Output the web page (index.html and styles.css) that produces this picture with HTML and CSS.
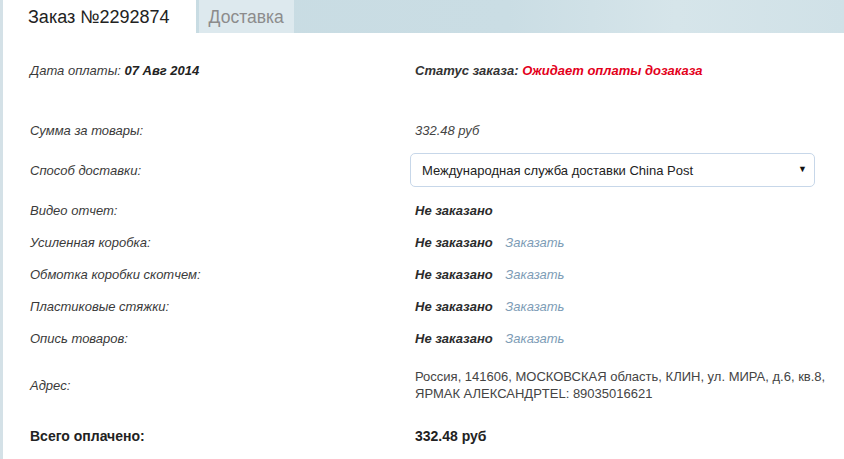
FILE: index.html
```html
<!DOCTYPE html>
<html lang="ru">
<head>
    <meta charset="UTF-8">
    <title>Заказ №2292874</title>
    <link rel="stylesheet" href="styles.css">
</head>
<body>
    <div class="page">
        <div class="tabs">
            <div class="tab active">Заказ №2292874</div>
            <div class="tab">Доставка</div>
        </div>

        <div class="order">
            <div class="row row-first">
                <div class="label">Дата оплаты: <b>07 Авг 2014</b></div>
                <div class="status">Статус заказа: <span class="status-value">Ожидает оплаты дозаказа</span></div>
            </div>

            <div class="row">
                <div class="label">Сумма за товары:</div>
                <div class="value">332.48 руб</div>
            </div>

            <div class="row row-select">
                <div class="label">Способ доставки:</div>
                <div class="select-wrap">
                    <select class="select">
                        <option>Международная служба доставки China Post</option>
                    </select>
                </div>
            </div>

            <div class="row">
                <div class="label">Видео отчет:</div>
                <div class="value"><b>Не заказано</b></div>
            </div>
            <div class="row">
                <div class="label">Усиленная коробка:</div>
                <div class="value"><b>Не заказано</b> <a href="#" class="order-link">Заказать</a></div>
            </div>
            <div class="row">
                <div class="label">Обмотка коробки скотчем:</div>
                <div class="value"><b>Не заказано</b> <a href="#" class="order-link">Заказать</a></div>
            </div>
            <div class="row">
                <div class="label">Пластиковые стяжки:</div>
                <div class="value"><b>Не заказано</b> <a href="#" class="order-link">Заказать</a></div>
            </div>
            <div class="row">
                <div class="label">Опись товаров:</div>
                <div class="value"><b>Не заказано</b> <a href="#" class="order-link">Заказать</a></div>
            </div>

            <div class="row row-address">
                <div class="label">Адрес:</div>
                <div class="address">Россия, 141606, МОСКОВСКАЯ область, КЛИН, ул. МИРА, д.6, кв.8,<br>ЯРМАК АЛЕКСАНДРTEL: 89035016621</div>
            </div>

            <div class="row row-total">
                <div class="total-label">Всего оплачено:</div>
                <div class="total-value">332.48 руб</div>
            </div>
        </div>
    </div>
</body>
</html>
```

FILE: styles.css
```css
body {
    margin: 0;
    font-family: 'Liberation Sans', Arial, sans-serif;
    background-color: #fff;
    color: #333;
}

.page {
    border-left: 3px solid #d4e1e7;
    min-height: 459px;
    box-sizing: border-box;
}

/* tabs */
.tabs {
    display: flex;
    height: 33px;
    background: linear-gradient(to right, #c7dbe2 0%, #cadde4 60%, #d6e5ea 80%, #d0e1e7 100%);
}

.tab {
    line-height: 34px;
    font-size: 17.5px;
    color: #8c8c8c;
    background-color: #dde9ee;
    padding: 0 10px;
    margin-left: 3px;
}

.tab.active {
    background-color: #fff;
    color: #222;
    font-size: 18px;
    padding: 0 26px 0 25px;
    margin-left: 0;
}

/* order info */
.order {
    padding: 21px 0 0 27px;
}

.row {
    display: grid;
    grid-template-columns: 385px 1fr;
    align-items: center;
    height: 32px;
    font-size: 13px;
}

.row-first {
    margin-bottom: 28px;
}

.row-select {
    height: 48px;
}

.row-address {
    height: 62px;
}

.row-total {
    height: 40px;
}

.label {
    font-style: italic;
    color: #3a3a3a;
}

.label b {
    color: #222;
}

.status {
    font-style: italic;
    font-weight: bold;
    color: #333;
}

.status-value {
    color: #e3001b;
}

.value {
    font-style: italic;
    color: #444;
}

.value b {
    color: #2b2b2b;
}

.order-link {
    color: #7d9cb6;
    text-decoration: none;
    margin-left: 9px;
}

.select-wrap {
    position: relative;
    margin-left: -5px;
    width: 405px;
}

.select-wrap::after {
    content: '▼';
    position: absolute;
    right: 8px;
    top: 11px;
    font-size: 9px;
    color: #111;
    pointer-events: none;
}

.select {
    appearance: none;
    -webkit-appearance: none;
    width: 100%;
    height: 34px;
    box-sizing: border-box;
    padding: 0 11px;
    border: 1px solid #c7d7e9;
    border-radius: 5px;
    background-color: #fff;
    font-family: 'Liberation Sans', Arial, sans-serif;
    font-size: 13px;
    color: #222;
}

.address {
    font-size: 13px;
    line-height: 17px;
    white-space: nowrap;
    color: #444;
}

.total-label,
.total-value {
    font-size: 14px;
    font-weight: bold;
    color: #222;
}
```
